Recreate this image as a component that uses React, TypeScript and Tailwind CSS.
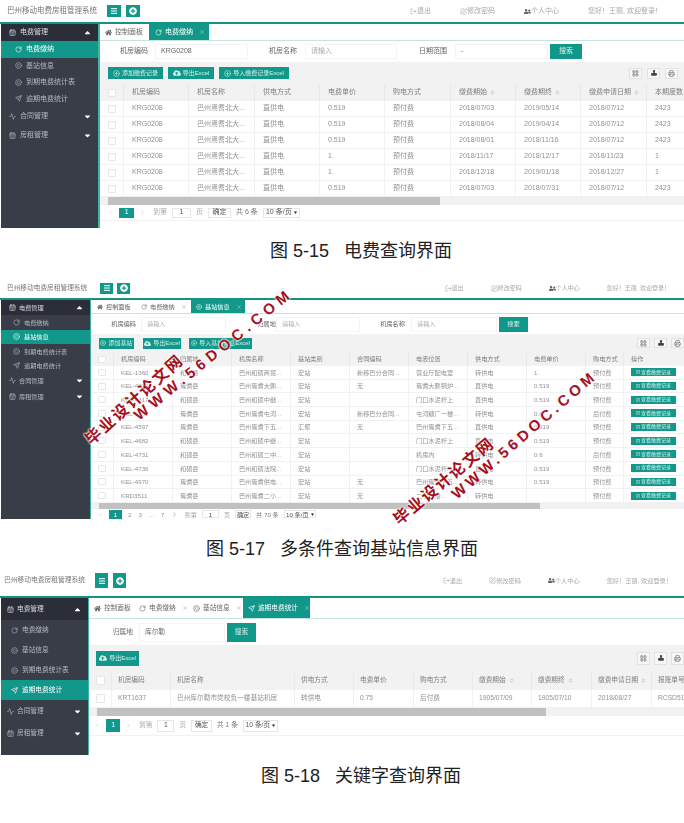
import { Activity, CalendarDays, ChevronLeft, ChevronRight, ChevronsUpDown, CircleArrowDown, CirclePlus, Copyright, LayoutGrid, LogOut, Menu, Printer, RotateCw, Send, SquarePen, Triangle, X } from 'lucide-react';
import { FaCaretDown, FaCaretUp, FaCloudUploadAlt, FaHome, FaPlusCircle, FaRegCheckSquare, FaStamp, FaUserFriends } from 'react-icons/fa';
import type { ReactNode } from 'react';

const teal = 'bg-[#12988a]';

type Cfg = {
  root: string;
  text: string;
  head: string;
  title: string;
  headBtn: string;
  headBtnGap: string;
  links: string;
  side: string;
  sideHead: string;
  sideItem: string;
  sideTail: string;
  sideLast: string;
  sidePad: string;
  sideRowPad: string;
  tabs: string;
  tabList: { label: string; icon: ReactNode; cls: string; active?: boolean; close?: boolean }[];
  filter: string;
  filters: { label: string; value?: string; labelCls: string; inputCls: string }[];
  inputH: string;
  searchCls: string;
  toolbar: string;
  toolH: string;
  tools: { label: string; icon: ReactNode; cls: string }[];
  toolIcons: string;
  toolIcon: string;
  grid: string;
  headRow: string;
  row: string;
  cell: string;
  check: string;
  cols: string[];
  sortable: number[];
  rows: string[][];
  action?: boolean;
  track: string;
  thumb: string;
  pager: string;
  pages: string[];
  pageBtn: string;
  pagerInput: string;
  pagerOk: string;
  total: string;
  select: string;
  activeItem: number;
};

const p1Rows = [
  ['KRG0208', '巴州焉耆北大...', '直供电', '0.519', '预付费', '2018/07/03', '2019/05/14', '2018/07/12', '2423'],
  ['KRG0208', '巴州焉耆北大...', '直供电', '0.519', '预付费', '2018/08/04', '2019/04/14', '2018/07/12', '2423'],
  ['KRG0208', '巴州焉耆北大...', '直供电', '0.519', '预付费', '2018/08/01', '2018/11/16', '2018/07/12', '2423'],
  ['KRG0208', '巴州焉耆北大...', '直供电', '1', '预付费', '2018/11/17', '2018/12/17', '2018/11/23', '1'],
  ['KRG0208', '巴州焉耆北大...', '直供电', '1', '预付费', '2018/12/18', '2019/01/18', '2018/12/27', '1'],
  ['KRG0208', '巴州焉耆北大...', '直供电', '0.519', '预付费', '2018/07/03', '2018/07/31', '2018/07/12', '2423'],
];

const p2Rows = [
  ['KEL-1360', '和硕县', '巴州和硕商贸...', '宏站', '新移巴分合同...', '营业厅配电室', '转供电', '1', '预付费'],
  ['KEL-4226', '焉耆县', '巴州焉耆大鹏...', '宏站', '无', '焉耆大鹏锅炉...', '直供电', '0.519', '预付费'],
  ['KEL-4317', '和硕县', '巴州和硕中继...', '宏站', '', '门口水泥杆上', '直供电', '0.519', '预付费'],
  ['KEL-4590', '焉耆县', '巴州焉耆屯河...', '宏站', '新移巴分合同...', '屯河糖厂一楼...', '转供电', '0.6', '后付费'],
  ['KEL-4597', '焉耆县', '巴州焉耆下五...', '汇聚', '无', '巴州焉耆下五...', '直供电', '0.519', '预付费'],
  ['KEL-4682', '和硕县', '巴州和硕中继...', '宏站', '', '门口水泥杆上', '直供电', '0.519', '预付费'],
  ['KEL-4731', '和硕县', '巴州和硕二中...', '宏站', '', '机房内', '转供电', '0.6', '后付费'],
  ['KEL-4736', '和硕县', '巴州和硕法院...', '宏站', '', '门口水泥杆...', '直供电', '0.519', '预付费'],
  ['KEL-4970', '焉耆县', '巴州焉耆供电...', '宏站', '无', '巴州焉耆下五...', '转供电', '0.519', '预付费'],
  ['KRD3511', '焉耆县', '巴州焉耆二小...', '宏站', '无', '二小一楼...', '转供电', '', '预付费'],
];

const p3Rows = [['KRT1637', '巴州库尔勒市党校负一楼基站机房', '转供电', '0.75', '后付费', '1905/07/09', '1905/07/10', '2018/08/27', 'RCSD51']];

const panels: Cfg[] = [
  {
    root: 'h-[228px]',
    text: 'text-[7px]',
    head: 'h-[24px] pl-[7px] pr-[22px]',
    title: 'w-[100px] text-[7.5px]',
    headBtn: 'w-[14px] h-[12px]',
    headBtnGap: 'gap-[5px]',
    links: 'gap-[29px] text-[7px]',
    side: 'w-[99px] ml-px border-r-2',
    sideHead: 'h-[17px]',
    sideItem: 'h-[16.5px]',
    sideTail: 'h-[18px]',
    sideLast: 'h-[20px]',
    sidePad: 'pl-[14px] gap-[4px]',
    sideRowPad: 'pl-[8px] gap-[4px]',
    tabs: 'h-[17px]',
    tabList: [
      { label: '控制面板', icon: <FaHome size={7} />, cls: 'w-[49px] pl-[5px]' },
      { label: '电费缴纳', icon: <RotateCw size={7} />, cls: 'w-[60px] pl-[6px]', active: true, close: true },
    ],
    filter: 'h-[21px]',
    filters: [
      { label: '机房编码', value: 'KRG0208', labelCls: 'w-[48px]', inputCls: 'w-[93px] ml-[7px]' },
      { label: '机房名称', labelCls: 'w-[49px]', inputCls: 'w-[92px] ml-[8px]' },
      { label: '日期范围', value: '-', labelCls: 'w-[50px]', inputCls: 'w-[93px] ml-[8px]' },
    ],
    inputH: 'h-[15px]',
    searchCls: 'w-[32px] h-[15px]',
    toolbar: 'h-[22px] pl-[8px] pr-[6px]',
    toolH: 'h-[12px]',
    tools: [
      { label: '添加缴费记录', icon: <CirclePlus size={7} />, cls: 'w-[55px] mr-[5px]' },
      { label: '导出Excel', icon: <FaCloudUploadAlt size={8} />, cls: 'w-[46px] mr-[5px]' },
      { label: '导入缴费记录Excel', icon: <CircleArrowDown size={7} />, cls: 'w-[70px]' },
    ],
    toolIcons: 'gap-[5px]',
    toolIcon: 'w-[13px] h-[11px]',
    grid: 'grid-cols-[24px_65px_66px_65px_65px_66px_65px_65px_66px_65px]',
    headRow: 'h-[17px]',
    row: 'h-[16px]',
    cell: 'pl-[8px]',
    check: 'w-[8px] h-[8px]',
    cols: ['机房编码', '机房名称', '供电方式', '电费单价', '购电方式', '缴费期始', '缴费期终', '缴费申请日期', '本期度数'],
    sortable: [5, 6, 7],
    rows: p1Rows,
    track: 'h-[8px] pl-[8px]',
    thumb: 'w-[332px]',
    pager: 'h-[16px] pl-[7px]',
    pages: ['1'],
    pageBtn: 'w-[15px] h-[10px]',
    pagerInput: 'w-[19px] h-[10px]',
    pagerOk: 'w-[23px] h-[10px]',
    total: '共 6 条',
    select: 'w-[37px] h-[10px]',
    activeItem: 0,
  },
  {
    root: 'h-[241px]',
    text: 'text-[6.2px]',
    head: 'h-[22px] pl-[7px] pr-[14px]',
    title: 'w-[93px] text-[6.7px]',
    headBtn: 'w-[13px] h-[11px]',
    headBtnGap: 'gap-[4px]',
    links: 'gap-[27px] text-[6px]',
    side: 'w-[90px] ml-px border-r',
    sideHead: 'h-[15px]',
    sideItem: 'h-[14.5px]',
    sideTail: 'h-[15.5px]',
    sideLast: 'h-[16px]',
    sidePad: 'pl-[12px] gap-[4px]',
    sideRowPad: 'pl-[8px] gap-[3px]',
    tabs: 'h-[14px]',
    tabList: [
      { label: '控制面板', icon: <FaHome size={6} />, cls: 'w-[45px] pl-[6px]' },
      { label: '电费缴纳', icon: <RotateCw size={6} />, cls: 'w-[55px] pl-[5px]', close: true },
      { label: '基站信息', icon: <Copyright size={6} />, cls: 'w-[54px] pl-[5px]', active: true, close: true },
    ],
    filter: 'h-[20px]',
    filters: [
      { label: '机房编码', labelCls: 'w-[45px]', inputCls: 'w-[85px] ml-[5px]' },
      { label: '归属地', labelCls: 'w-[50px]', inputCls: 'w-[84px] ml-[0px]' },
      { label: '机房名称', labelCls: 'w-[45px]', inputCls: 'w-[86px] ml-[6px]' },
    ],
    inputH: 'h-[15px]',
    searchCls: 'w-[29px] h-[15px]',
    toolbar: 'h-[18px] pl-[8px] pr-0',
    toolH: 'h-[11px]',
    tools: [
      { label: '添加基站', icon: <CirclePlus size={6} />, cls: 'w-[35px] mr-[9px]' },
      { label: '导出Excel', icon: <FaCloudUploadAlt size={7} />, cls: 'w-[38px] mr-[8px]' },
      { label: '导入基站信息Excel', icon: <CircleArrowDown size={6} />, cls: 'w-[63px]' },
    ],
    toolIcons: 'gap-[4px]',
    toolIcon: 'w-[13px] h-[10px]',
    grid: 'grid-cols-[23px_59px_59px_59px_59px_59px_59px_59px_59px_38px_61px]',
    headRow: 'h-[14px]',
    row: 'h-[13.7px]',
    cell: 'pl-[7px]',
    check: 'w-[8px] h-[7px]',
    cols: ['机房编码', '归属地', '机房名称', '基站类别', '合同编码', '电表位置', '供电方式', '电费单价', '购电方式', '操作'],
    sortable: [],
    rows: p2Rows,
    action: true,
    track: 'h-[6px] pl-[8px]',
    thumb: 'w-[441px]',
    pager: 'h-[12px] pl-[6px]',
    pages: ['1', '2', '3', '...', '7'],
    pageBtn: 'w-[13px] h-[9px]',
    pagerInput: 'w-[17px] h-[8px]',
    pagerOk: 'w-[16px] h-[8px]',
    total: '共 70 条',
    select: 'w-[32px] h-[8px]',
    activeItem: 1,
  },
  {
    root: 'h-[190px]',
    text: 'text-[6.7px]',
    head: 'h-[33px] pl-[4px] pr-[12px]',
    title: 'w-[91px] text-[6.75px]',
    headBtn: 'w-[13px] h-[15px]',
    headBtnGap: 'gap-[5px]',
    links: 'gap-[27px] text-[6.2px]',
    side: 'w-[88px] ml-px border-r',
    sideHead: 'h-[22px]',
    sideItem: 'h-[20px]',
    sideTail: 'h-[22px]',
    sideLast: 'h-[22px]',
    sidePad: 'pl-[10px] gap-[4px]',
    sideRowPad: 'pl-[6px] gap-[3px]',
    tabs: 'h-[21px]',
    tabList: [
      { label: '控制面板', icon: <FaHome size={7} />, cls: 'w-[47px] pl-[5px]' },
      { label: '电费缴纳', icon: <RotateCw size={7} />, cls: 'w-[55px] pl-[3px]', close: true },
      { label: '基站信息', icon: <Copyright size={7} />, cls: 'w-[52px] pl-[2px]', close: true },
      { label: '逾期电费统计', icon: <Send size={7} />, cls: 'w-[67px] pl-[5px]', active: true, close: true },
    ],
    filter: 'h-[26px]',
    filters: [{ label: '归属地', value: '库尔勒', labelCls: 'w-[44px]', inputCls: 'w-[86px] ml-[6px]' }],
    inputH: 'h-[19px]',
    searchCls: 'w-[29px] h-[19px]',
    toolbar: 'h-[26px] pl-[7px] pr-0',
    toolH: 'h-[15px]',
    tools: [{ label: '导出Excel', icon: <FaCloudUploadAlt size={8} />, cls: 'w-[43px]' }],
    toolIcons: 'gap-[4px]',
    toolIcon: 'w-[13px] h-[13px]',
    grid: 'grid-cols-[23px_59px_124px_59px_60px_59px_59px_60px_60px_60px]',
    headRow: 'h-[19px]',
    row: 'h-[18px]',
    cell: 'pl-[6px]',
    check: 'w-[9px] h-[9px]',
    cols: ['机房编码', '机房名称', '供电方式', '电费单价', '购电方式', '缴费期始', '缴费期终', '缴费申请日期', '报账单号'],
    sortable: [5, 6, 7],
    rows: p3Rows,
    track: 'h-[8px] pl-[8px]',
    thumb: 'w-[449px]',
    pager: 'h-[20px] pl-[5px]',
    pages: ['1'],
    pageBtn: 'w-[14px] h-[13px]',
    pagerInput: 'w-[17px] h-[12px]',
    pagerOk: 'w-[21px] h-[12px]',
    total: '共 1 条',
    select: 'w-[35px] h-[12px]',
    activeItem: 3,
  },
];

const sideItems = [
  { label: '电费缴纳', icon: <RotateCw size={7} /> },
  { label: '基站信息', icon: <Copyright size={7} /> },
  { label: '到期电费统计表', icon: <Copyright size={7} /> },
  { label: '逾期电费统计', icon: <Send size={7} /> },
];

function Panel({ c }: { c: Cfg }) {
  return (
    <div className={`${c.root} ${c.text} flex flex-col text-[#929292] blur-[0.4px]`}>
      <div className={`${c.head} flex items-center shrink-0 border-b-2 border-[#17927f]`}>
        <span className={`${c.title} text-[#777] whitespace-nowrap`}>巴州移动电费房租管理系统</span>
        <div className={`flex ${c.headBtnGap}`}>
          <span className={`${c.headBtn} ${teal} text-white flex items-center justify-center`}><Menu size={8} strokeWidth={3} /></span>
          <span className={`${c.headBtn} ${teal} text-white flex items-center justify-center`}><FaPlusCircle size={8} /></span>
        </div>
        <div className={`ml-auto flex items-center ${c.links} text-[#a8a8a8]`}>
          <span className="flex items-center"><LogOut size={7} />退出</span>
          <span className="flex items-center"><SquarePen size={7} />修改密码</span>
          <span className="flex items-center"><FaUserFriends size={7} className="text-[#666]" />个人中心</span>
          <span>您好！王丽, 欢迎登录！</span>
        </div>
      </div>
      <div className="flex flex-1 min-h-0">
        <div className={`${c.side} shrink-0 bg-[#383d48] border-[#3fb5a5] text-[#b4b8bf]`}>
          <div className={`${c.sideHead} ${c.sideRowPad} bg-[#2b2e39] flex items-center pr-[6px] text-[#d8dade]`}>
            <CalendarDays size={7} />电费管理<FaCaretUp size={9} className="ml-auto text-white" />
          </div>
          {sideItems.map((it, i) => (
            <div key={it.label} className={`${c.sideItem} ${c.sidePad} flex items-center ${i === c.activeItem ? `${teal} text-white` : ''}`}>
              {it.icon}<span className="whitespace-nowrap">{it.label}</span>
            </div>
          ))}
          <div className={`${c.sideTail} ${c.sideRowPad} flex items-center pr-[6px]`}>
            <Activity size={7} />合同管理<FaCaretDown size={9} className="ml-auto text-white" />
          </div>
          <div className={`${c.sideLast} ${c.sideRowPad} flex items-center pr-[6px]`}>
            <CalendarDays size={7} />房租管理<FaCaretDown size={9} className="ml-auto text-white" />
          </div>
        </div>
        <div className="flex-1 min-w-0 overflow-hidden bg-white">
          <div className={`${c.tabs} flex items-center border-b border-[#c4e4e0]`}>
            {c.tabList.map((t) => (
              <span key={t.label} className={`${t.cls} h-full shrink-0 flex items-center gap-[3px] whitespace-nowrap ${t.active ? `${teal} text-white` : 'text-[#666]'}`}>
                {t.icon}{t.label}{t.close && <X size={6} className="ml-[3px] opacity-60" />}
              </span>
            ))}
          </div>
          <div className={`${c.filter} flex items-center`}>
            {c.filters.map((f) => (
              <div key={f.label} className="flex items-center">
                <span className={`${f.labelCls} text-right text-[#666] shrink-0`}>{f.label}</span>
                <span className={`${f.inputCls} ${c.inputH} border border-[#f4f4f4] flex items-center pl-[5px] ${f.value ? 'text-[#666]' : 'text-[#aaa]'}`}>
                  {f.value ?? '请输入'}
                </span>
              </div>
            ))}
            <span className={`${c.searchCls} ${teal} text-[#d5f0ec] flex items-center justify-center ml-[2px] mr-auto`}>搜索</span>
          </div>
          <div className={`${c.toolbar} bg-[#f2f2f2] flex items-center`}>
            {c.tools.map((t) => (
              <span key={t.label} className={`${t.cls} ${c.toolH} ${teal} text-[#d5f0ec] flex items-center justify-center gap-[2px] whitespace-nowrap text-[6px]`}>
                {t.icon}{t.label}
              </span>
            ))}
            <div className={`ml-auto flex ${c.toolIcons}`}>
              {[<LayoutGrid size={7} key="a" />, <FaStamp size={6} key="b" className="text-[#444]" />, <Printer size={7} key="c" />].map((ic, i) => (
                <span key={i} className={`${c.toolIcon} bg-[#f7f7f7] border border-[#e2e2e2] flex items-center justify-center text-[#666]`}>{ic}</span>
              ))}
            </div>
          </div>
          <div className={`${c.headRow} ${c.grid} grid w-max bg-[#f2f2f2] items-stretch`}>
            <span className="flex items-center justify-center border-r border-[#e9e9e9]"><i className={`${c.check} bg-white border border-[#e6e6e6] rounded-[1px]`} /></span>
            {c.cols.map((h, i) => (
              <span key={h} className={`${c.cell} flex items-center border-r border-[#e9e9e9] whitespace-nowrap text-[#7f7f7f]`}>
                {h}{c.sortable.includes(i) && <ChevronsUpDown size={5} className="ml-[3px]" />}
              </span>
            ))}
          </div>
          {c.rows.map((r, ri) => (
            <div key={ri} className={`${c.row} ${c.grid} grid w-max border-b border-[#f1f1f1]`}>
              <span className="flex items-center justify-center border-r border-[#f1f1f1]"><i className={`${c.check} bg-white border border-[#e6e6e6] rounded-[1px]`} /></span>
              {r.map((v, i) => (
                <span key={i} className={`${c.cell} flex items-center border-r border-[#f1f1f1] whitespace-nowrap overflow-hidden`}>{v}</span>
              ))}
              {c.action && (
                <span className="flex items-center pl-[7px]">
                  <span className={`w-[45px] h-[8px] ${teal} text-[#d5f0ec] text-[5px] flex items-center justify-center gap-px whitespace-nowrap`}>
                    <FaRegCheckSquare size={4} />查看缴费记录
                  </span>
                </span>
              )}
            </div>
          ))}
          <div className={`${c.track} bg-[#f1f1f1] flex items-stretch`}>
            <span className={`${c.thumb} bg-[#c1c1c1]`} />
          </div>
          <div className={`${c.pager} flex items-center gap-[5px] border-b border-[#f2f2f2] whitespace-nowrap`}>
            <ChevronLeft size={7} className="text-[#ccc]" />
            {c.pages.map((p, i) => (
              <span key={p} className={i === 0 ? `${c.pageBtn} ${teal} text-white flex items-center justify-center` : 'mx-[1px]'}>{p}</span>
            ))}
            <ChevronRight size={7} className={c.pages.length > 1 ? 'text-[#888]' : 'text-[#ccc]'} />
            <span className="text-[#aaa] ml-[2px]">到第</span>
            <span className={`${c.pagerInput} border border-[#e6e6e6] flex items-center justify-center text-[#555]`}>1</span>
            <span className="text-[#aaa]">页</span>
            <span className={`${c.pagerOk} border border-[#e6e6e6] flex items-center justify-center text-[#555]`}>确定</span>
            <span className="text-[#777]">{c.total}</span>
            <span className={`${c.select} border border-[#e6e6e6] flex items-center justify-center gap-[2px] text-[#555]`}>
              10 条/页<Triangle size={3} fill="#333" className="rotate-180 text-[#333]" />
            </span>
          </div>
        </div>
      </div>
    </div>
  );
}

function Caption({ cls, children }: { cls: string; children: string }) {
  return (
    <div className={`${cls} flex items-center text-[18px] text-[#222] whitespace-pre`}>{children}</div>
  );
}

function Mark({ cls, children }: { cls: string; children: string }) {
  return (
    <span className={`${cls} absolute origin-left whitespace-nowrap font-bold text-[#a50f1e] [text-shadow:0_0_2px_#fff,0_0_2px_#fff,0_0_2px_#fff]`}>
      {children}
    </span>
  );
}

export default function App() {
  return (
    <div className="relative w-[684px] h-[823px] overflow-hidden bg-white [font-family:'Liberation_Sans','Noto_Sans_CJK_SC',sans-serif]">
      <Panel c={panels[0]} />
      <Caption cls="h-[50px] pl-[270px] pb-[4px]">{'图 5-15   电费查询界面'}</Caption>
      <Panel c={panels[1]} />
      <Caption cls="h-[46px] pl-[206px] pt-[14px]">{'图 5-17   多条件查询基站信息界面'}</Caption>
      <Panel c={panels[2]} />
      <Caption cls="h-[42px] pl-[261px]">{'图 5-18   关键字查询界面'}</Caption>

      <Mark cls="left-[136px] top-[406px] text-[15px] tracking-[5px] rotate-[-39deg]">WWW.56DOC.COM</Mark>
      <Mark cls="left-[88px] top-[430px] text-[16px] tracking-[2px] rotate-[-42deg]">毕业设计论文网</Mark>
      <Mark cls="left-[454px] top-[485px] text-[15px] tracking-[4px] rotate-[-41deg]">WWW.56DOC.COM</Mark>
      <Mark cls="left-[396px] top-[510px] text-[16px] tracking-[2px] rotate-[-40deg]">毕业设计论文网</Mark>
    </div>
  );
}
